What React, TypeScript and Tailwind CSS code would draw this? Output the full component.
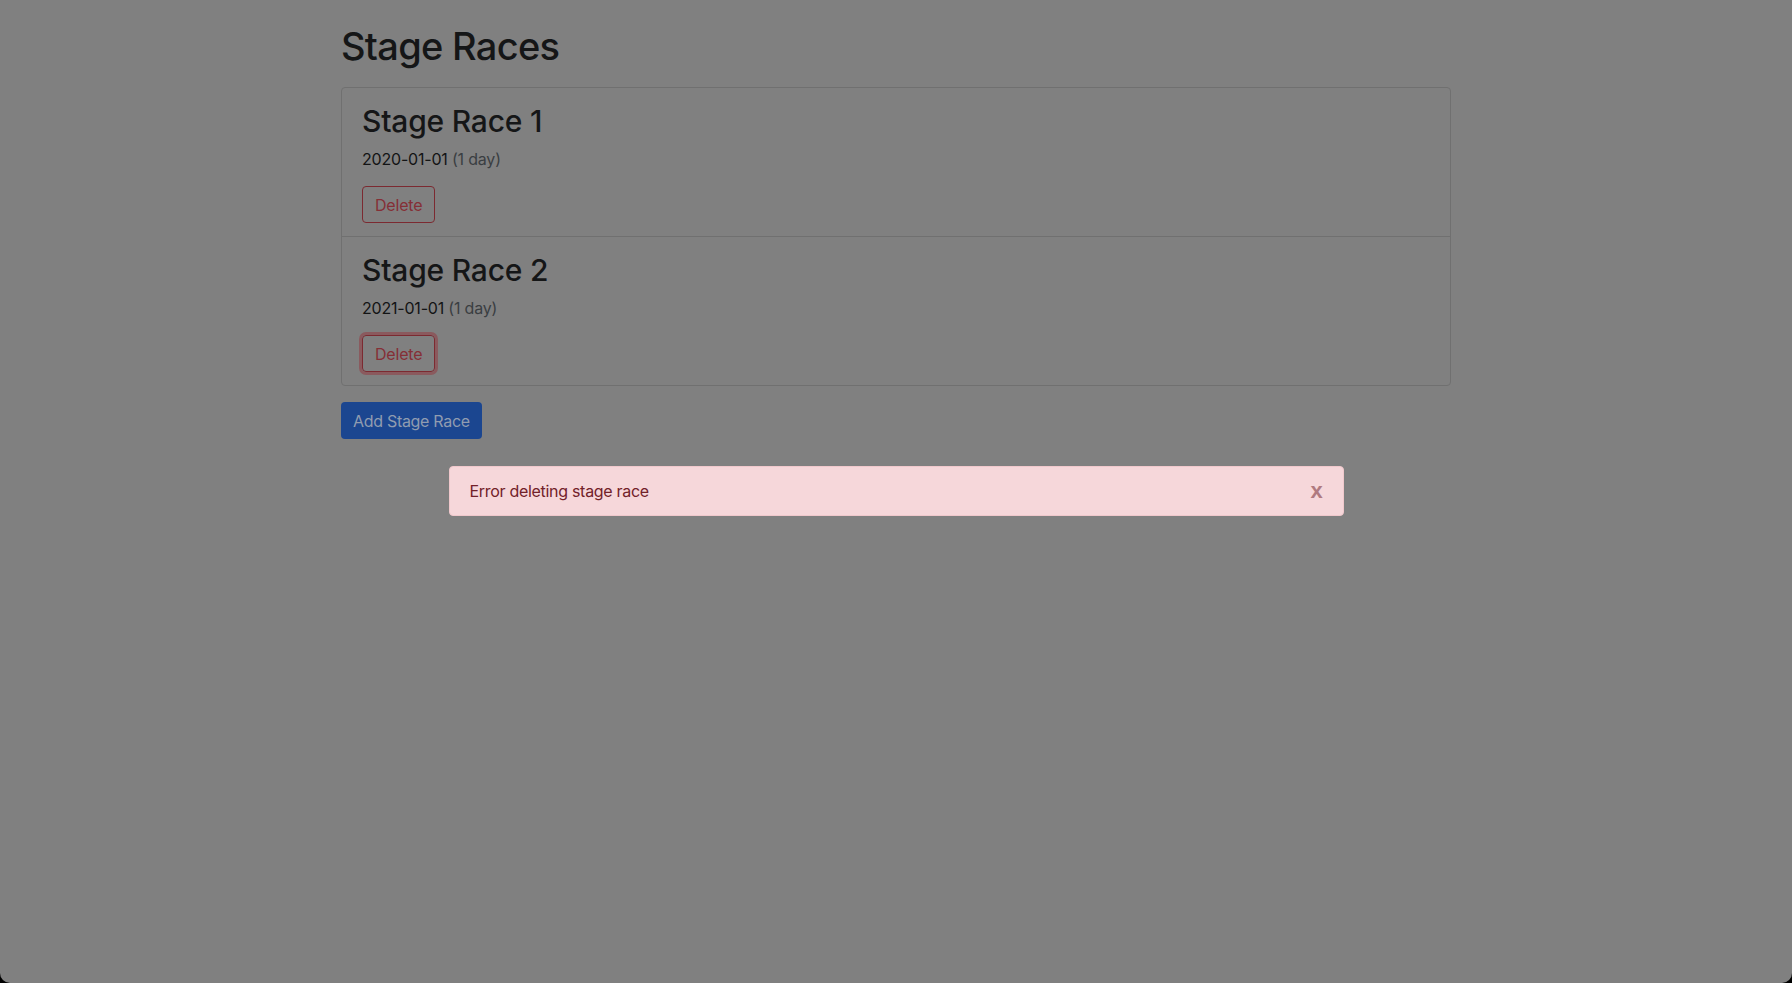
import React, { useState } from "react";

interface StageRace {
  id: number;
  name: string;
  date: string;
  days: number;
}

const races: StageRace[] = [
  { id: 1, name: "Stage Race 1", date: "2020-01-01", days: 1 },
  { id: 2, name: "Stage Race 2", date: "2021-01-01", days: 1 },
];

const App: React.FC = () => {
  const [error, setError] = useState<string | null>("Error deleting stage race");

  return (
    <div className="h-[983px] w-full bg-black font-['Inter','Liberation_Sans',sans-serif]">
      <div className="relative h-full w-full overflow-hidden rounded-b-[10px] bg-[#808080]">
        <div className="mx-auto w-[1140px] px-[15px] pt-[22px]">
          <h1 className="mb-[17px] text-[38px] leading-[48px] font-medium tracking-[-0.7px] text-[#151617]">
            Stage Races
          </h1>

          {/* 목록 */}
          <ul className="rounded-[4px] border border-[#707070]">
            {races.map((race, i) => (
              <li
                key={race.id}
                className={`px-5 pt-[15px] pb-[13px] ${i > 0 ? "border-t border-[#707070]" : ""}`}
              >
                <h2 className="mb-2 text-[30px] leading-[36px] font-medium tracking-[-0.2px] text-[#151617]">
                  {race.name}
                </h2>
                <p className="mb-[15px] text-[16px] leading-[24px] tracking-[-0.2px] text-[#131415]">
                  {race.date} <span className="text-[#3a3e42]">({race.days} day)</span>
                </p>
                <button
                  className={`h-[37px] rounded-[4px] border border-[#7c2a31] px-3 text-[16px] tracking-[-0.2px] text-[#852f36] ${
                    i === 1 ? "shadow-[0_0_0_3px_#8a5a5e]" : ""
                  }`}
                >
                  Delete
                </button>
              </li>
            ))}
          </ul>

          <button className="mt-4 h-[37px] rounded-[4px] bg-[#1b4690] px-3 text-[16px] tracking-[-0.3px] text-[#909cb0]">
            Add Stage Race
          </button>
        </div>

        {/* 오류 알림 */}
        {error && (
          <div className="absolute inset-x-0 top-[466px] flex justify-center">
            <div className="relative w-[895px] rounded-[4px] border border-[#f0c8cc] bg-[#f6d7da] py-3 pr-[60px] pl-5 text-[16px] leading-[24px] tracking-[-0.3px] text-[#722129]">
              {error}
              <button
                onClick={() => setError(null)}
                className="absolute top-0 right-0 px-5 py-3 text-[22px] leading-[24px] font-bold text-[#b07a80] font-['Liberation_Sans',sans-serif]"
              >
                x
              </button>
            </div>
          </div>
        )}
      </div>
    </div>
  );
};

export default App;
